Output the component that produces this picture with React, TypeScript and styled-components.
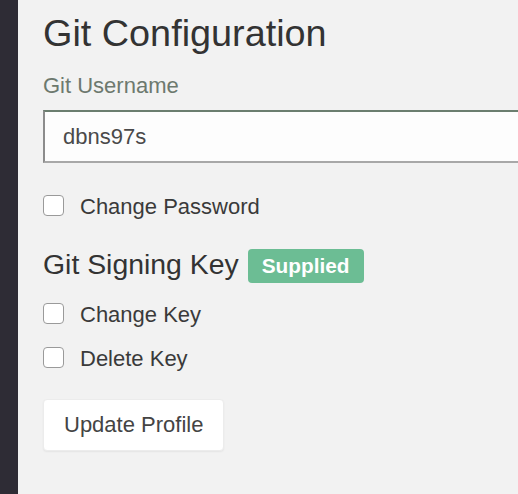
import React from "react";
import styled, { createGlobalStyle } from "styled-components";

const Global = createGlobalStyle`
  html, body { margin: 0; padding: 0; height: 100%; overflow: hidden; }
  body { font-family: "Liberation Sans", Arial, sans-serif; background: #f2f2f2; }
  #root { height: 100%; }
`;

const Page = styled.div`
  display: flex;
  height: 100%;
  min-height: 494px;
`;

const Sidebar = styled.div`
  width: 18px;
  flex: none;
  background: #2e2c35;
`;

const Main = styled.main`
  flex: 1;
  overflow: hidden;
  padding: 11px 0 0 25px;
  display: flex;
  flex-direction: column;
  align-items: flex-start;
  color: #333;
`;

const Title = styled.h1`
  margin: 0;
  font-size: 37.8px;
  line-height: 44px;
  font-weight: 400;
  color: #333;
`;

const Label = styled.label`
  margin-top: 18px;
  font-size: 22px;
  line-height: 26px;
  color: #6d796e;
`;

const TextInput = styled.input`
  margin-top: 11px;
  box-sizing: border-box;
  width: 560px;
  height: 53px;
  padding: 0 0 0 18px;
  border: 2px solid #8c8c8c;
  border-top-color: #6b7e6f;
  border-bottom-color: #a8a8a8;
  border-radius: 0;
  background: #fdfdfd;
  font-family: "Liberation Sans", Arial, sans-serif;
  font-size: 22px;
  color: #4a4a4a;
  outline: none;
`;

const CheckRow = styled.label<{ $top: number }>`
  display: flex;
  align-items: flex-start;
  gap: 16px;
  margin-top: ${(p) => p.$top}px;
  font-size: 22px;
  line-height: 26px;
  color: #3a3a3a;
`;

const Box = styled.input`
  appearance: none;
  -webkit-appearance: none;
  margin: 1px 0 0 0;
  box-sizing: border-box;
  width: 21px;
  height: 21px;
  border: 1.5px solid #9a9a9a;
  border-radius: 4px;
  background: #fff;
  flex: none;
`;

const SectionRow = styled.div`
  display: flex;
  align-items: flex-start;
  gap: 9px;
  margin-top: 28px;
`;

const Heading = styled.h2`
  margin: 0;
  font-size: 28.4px;
  line-height: 32px;
  font-weight: 400;
  color: #333;
`;

const Badge = styled.span`
  margin-top: 1px;
  display: inline-flex;
  align-items: center;
  height: 34px;
  padding: 0 14px;
  border-radius: 4px;
  background: #6cbd94;
  color: #fff;
  font-weight: 700;
  font-size: 20.8px;
`;

const Button = styled.button`
  margin-top: 27px;
  height: 52px;
  padding: 0 20px;
  border: 1px solid #ececec;
  border-radius: 4px;
  background: #fff;
  box-shadow: 0 1px 2px rgba(0, 0, 0, 0.06);
  font-family: "Liberation Sans", Arial, sans-serif;
  font-size: 22px;
  line-height: 26px;
  color: #444;
`;

export default function App() {
  return (
    <>
      <Global />
      <Page>
        <Sidebar />
        <Main>
          <Title>Git Configuration</Title>
          <Label>Git Username</Label>
          <TextInput defaultValue="dbns97s" />
          <CheckRow $top={31}>
            <Box type="checkbox" />
            Change Password
          </CheckRow>
          <SectionRow>
            <Heading>Git Signing Key</Heading>
            <Badge>Supplied</Badge>
          </SectionRow>
          <CheckRow $top={19}>
            <Box type="checkbox" />
            Change Key
          </CheckRow>
          <CheckRow $top={18}>
            <Box type="checkbox" />
            Delete Key
          </CheckRow>
          <Button>Update Profile</Button>
        </Main>
      </Page>
    </>
  );
}
